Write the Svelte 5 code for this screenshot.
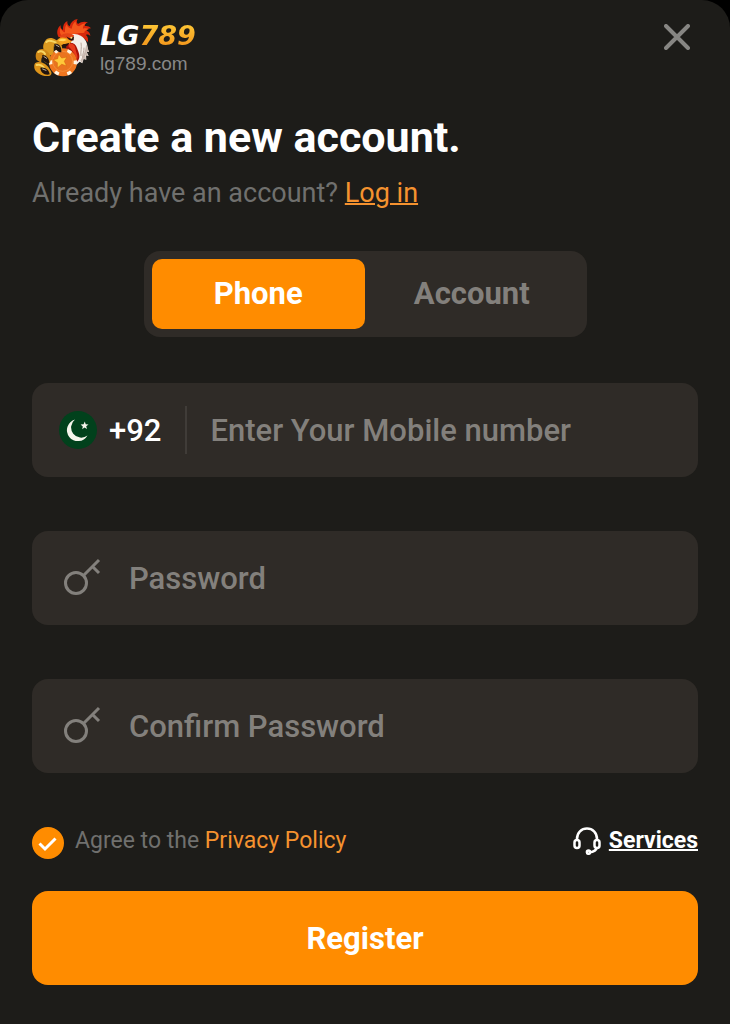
<script>
    let tab = "phone";
    let mobile = "";
    let account = "";
    let password = "";
    let confirmPassword = "";
    let agreed = true;

    const tabs = [
        { id: "phone", label: "Phone" },
        { id: "account", label: "Account" },
    ];
</script>

{#snippet keyIcon()}
    <svg class="key" viewBox="0 0 36 36" aria-hidden="true">
        <circle cx="12" cy="23" r="10.5" />
        <path d="M19.5 15.5L35 0M28.5 6.5L35 13" />
    </svg>
{/snippet}

<main class="sheet">
    <header>
        <a class="brand" href="#home">
            <svg class="mascot" viewBox="6 9 192 192" aria-hidden="true">
                <!-- comb -->
                <path fill="#d8280c" d="M86 76C78 62 82 48 92 40C91 48 94 52 99 54C98 42 102 32 112 27C111 35 114 40 119 43C122 31 130 23 143 21C139 28 140 33 144 36C153 29 164 27 174 31C166 34 164 38 165 42C172 41 178 43 183 49C175 49 171 52 170 56C177 58 181 64 181 72C175 67 171 67 168 69C174 75 176 83 173 91C165 77 148 68 130 68Z" />
                <path fill="#f4571c" d="M92 68C88 59 89 52 92 48C95 56 100 60 105 61C104 50 106 42 110 37C113 46 119 50 125 50C127 39 131 32 137 28C137 37 140 42 147 43C155 37 162 34 168 34C161 39 158 45 159 50C166 48 172 49 176 52C167 54 163 58 163 62C151 63 121 64 108 74Z" />
                <!-- neck -->
                <path fill="#f5eee8" d="M112 72C133 59 158 68 168 88C174 100 172 111 177 120L170 119L176 132L168 130L169 143L161 141L157 154L149 149L139 159L133 133L126 99Z" />
                <path fill="#c9b9b0" d="M169 96L177 120L169 119L175 132L166 130L168 142L160 140L156 153L151 146C161 132 166 116 169 96Z" />
                <path fill="none" stroke="#b8a69c" stroke-width="3" d="M153 92C156 108 151 119 153 132M162 107C163 118 157 127 158 137" />
                <!-- wattle -->
                <path fill="#a91308" d="M108 95C123 89 137 94 141 108C145 120 154 134 143 148C137 151 133 143 130 131C126 116 119 111 109 112Z" />
                <path fill="#e83b1c" d="M116 95C128 93 135 99 136 109C137 122 146 132 141 142C136 131 130 116 116 104Z" />
                <!-- face and beak -->
                <path fill="#e24316" d="M88 73C101 62 121 61 132 70L126 87L98 94Z" />
                <path fill="#f3a21d" d="M79 88C84 77 97 73 110 79L125 88L118 96L101 96L91 105Z" />
                <path fill="#ffd65c" d="M85 86C91 79 102 79 111 84L100 88Z" />
                <path fill="#27130c" d="M91 100L119 92L111 102L95 105ZM109 72C116 80 124 81 132 73L131 85C122 88 114 83 109 72Z" />
                <circle cx="124" cy="77" r="3" fill="#ffe58a" />
                <!-- chip -->
                <circle cx="99" cy="151" r="42" fill="#f0761f" />
                <circle cx="99" cy="151" r="37" fill="none" stroke="#fff3df" stroke-width="10" stroke-dasharray="13 25.7" stroke-dashoffset="7" />
                <circle cx="98" cy="148" r="30" fill="#ea7420" stroke="#f79a45" stroke-width="2" />
                <path fill="#ffc83a" stroke="#d96a10" stroke-width="2" d="M86 126L95 138L111 135L103 148L110 162L95 157L82 168L82 152L69 143L83 140Z" />
                <!-- claws -->
                <path fill="#dc9a20" d="M45 88C51 75 67 76 77 83C91 88 99 101 96 116C87 121 76 111 72 100C70 110 74 122 66 128C58 134 50 126 44 119C37 110 39 95 45 88Z" />
                <path fill="#cf8716" d="M22 117C32 106 49 110 57 124C64 135 65 148 57 154C46 155 39 144 38 134C33 137 34 148 34 153L20 144C15 134 17 123 22 117Z" />
                <path fill="#df951a" d="M16 153C29 145 51 155 60 173C68 182 65 192 54 192C38 194 16 183 13 168C12 161 13 156 16 153Z" />
                <path fill="none" stroke="#f8d662" stroke-width="6" stroke-linecap="round" d="M49 90C57 81 67 88 77 91M25 120C33 115 42 119 45 126M20 159C29 156 36 160 41 166" />
                <path fill="#20140f" d="M73 96C88 93 96 107 94 121C82 121 72 109 73 96ZM37 129C49 128 58 139 58 154C45 154 35 142 37 129ZM31 167C45 164 58 174 59 187C44 191 31 181 31 167Z" />
                <path fill="none" stroke="#c5b59b" stroke-width="3" stroke-linecap="round" d="M78 99L87 104M42 134L50 139M38 171L48 175" />
            </svg>
            <span class="wordmark">
                <span class="name">LG<span class="digits">789</span></span>
                <span class="domain">lg789.com</span>
            </span>
        </a>
        <button class="close" type="button" aria-label="Close">
            <svg viewBox="0 0 26 26" aria-hidden="true">
                <path d="M2 2L24 24M24 2L2 24" />
            </svg>
        </button>
    </header>

    <h1>Create a new account.</h1>
    <p class="login">Already have an account? <a href="#login">Log in</a></p>

    <div class="tabs">
        {#each tabs as item}
            <button
                type="button"
                class:selected={tab === item.id}
                aria-pressed={tab === item.id}
                on:click={() => (tab = item.id)}
            >
                {item.label}
            </button>
        {/each}
    </div>

    <form on:submit|preventDefault>
        {#if tab === "phone"}
            <div class="field phone">
                <button class="country" type="button" aria-label="Country code +92">
                    <svg class="flag" viewBox="0 0 38 38" aria-hidden="true">
                        <circle cx="19" cy="19" r="19" fill="#01411c" />
                        <path fill="#f5f5ec" d="M16 8.5A11 11 0 1 0 28.5 24.5A9.5 9.5 0 1 1 16 8.5Z" />
                        <path fill="#f5f5ec" d="M25.8 10.5L26.7 13.3L29.5 13.6L27.2 15.3L28 18.1L25.5 16.6L23.2 18.2L23.8 15.4L21.6 13.5L24.6 13.2Z" />
                    </svg>
                    +92
                </button>
                <input type="tel" aria-label="Mobile number" placeholder="Enter Your Mobile number" bind:value={mobile} />
            </div>
        {:else}
            <label class="field">
                <input type="text" aria-label="Account" placeholder="Account" bind:value={account} />
            </label>
        {/if}

        <label class="field">
            {@render keyIcon()}
            <input type="password" aria-label="Password" placeholder="Password" bind:value={password} />
        </label>

        <label class="field">
            {@render keyIcon()}
            <input type="password" aria-label="Confirm Password" placeholder="Confirm Password" bind:value={confirmPassword} />
        </label>

        <div class="terms">
            <div class="agree">
                <span class="check">
                    <input id="agree" type="checkbox" bind:checked={agreed} />
                    <svg viewBox="0 0 32 32" aria-hidden="true">
                        <path d="M7.5 16.5L13 22L23.5 11.5" />
                    </svg>
                </span>
                <span><label for="agree">Agree to the</label> <a href="#privacy">Privacy Policy</a></span>
            </div>
            <a class="services" href="#services">
                <svg viewBox="0 0 28 28" aria-hidden="true">
                    <path d="M4 13V12C4 5.5 8.5 1.5 14 1.5S24 5.5 24 12V13M24 20C23.5 23 20 25 16 25.5" />
                    <rect x="1.5" y="13" width="5" height="8" rx="2.5" />
                    <rect x="21.5" y="13" width="5" height="8" rx="2.5" />
                    <circle cx="15.5" cy="25.2" r="1.6" />
                </svg>
                <span>Services</span>
            </a>
        </div>

        <button class="register" type="submit">Register</button>
    </form>
</main>

<style>
    :global(body) {
        background: #000;
    }

    .sheet {
        box-sizing: border-box;
        min-height: 100vh;
        padding: 15px 32px 39px;
        border-radius: 28px 28px 0 0;
        background: #1d1c19;
        color: #fff;
        font-family: Roboto, sans-serif;
    }

    button,
    input {
        font-family: inherit;
    }

    button {
        padding: 0;
        border: none;
        background: none;
        color: inherit;
        cursor: pointer;
    }

    a {
        color: #f5922f;
    }

    header {
        display: flex;
        justify-content: space-between;
        align-items: flex-start;
    }

    .brand {
        display: flex;
        align-items: center;
        gap: 4px;
        text-decoration: none;
    }

    .mascot {
        width: 64px;
        height: 64px;
    }

    .wordmark {
        display: flex;
        flex-direction: column;
        padding-top: 2px;
    }

    .name {
        color: #fff;
        font: italic 700 27px/32px "DejaVu Sans", sans-serif;
    }

    .digits {
        background: linear-gradient(#ffcf3a, #f08c17);
        background-clip: text;
        color: transparent;
    }

    .domain {
        color: #888;
        font: 19px/24px "Liberation Sans", sans-serif;
    }

    .close {
        display: flex;
        margin-top: 9px;
        padding: 0 8px;
    }

    .close svg {
        width: 26px;
        height: 26px;
        fill: none;
        stroke: #878683;
        stroke-width: 4;
        stroke-linecap: round;
    }

    h1 {
        margin: 32px 0 0;
        font-size: 43px;
        font-weight: 700;
        line-height: 52px;
    }

    .login {
        margin: 14px 0 0;
        color: #70706e;
        font-size: 27px;
        line-height: 32px;
    }

    .login a {
        text-decoration-thickness: 2px;
    }

    .tabs {
        display: flex;
        box-sizing: border-box;
        max-width: 443px;
        margin: 42px auto 0;
        padding: 8px;
        border-radius: 16px;
        background: #2f2b27;
    }

    .tabs button {
        flex: 1;
        height: 70px;
        padding-bottom: 2px;
        border-radius: 10px;
        color: #83807c;
        font-size: 31px;
        font-weight: 700;
    }

    .tabs button.selected {
        background: #ff8c00;
        color: #fff;
    }

    form {
        display: flex;
        flex-direction: column;
        margin-top: 46px;
    }

    .field {
        display: flex;
        align-items: center;
        box-sizing: border-box;
        height: 94px;
        margin-bottom: 54px;
        padding: 0 32px;
        border-radius: 16px;
        background: #2f2b27;
    }

    .phone {
        padding-left: 27px;
    }

    .country {
        display: flex;
        align-items: center;
        gap: 12px;
        height: 48px;
        margin-right: 23px;
        padding-right: 24px;
        border-right: 2px solid #403c38;
        font-size: 31px;
        font-weight: 500;
    }

    .flag {
        width: 38px;
        height: 38px;
    }

    .key {
        width: 36px;
        height: 36px;
        margin-right: 29px;
        flex: none;
        overflow: visible;
        fill: none;
        stroke: #83807c;
        stroke-width: 3;
    }

    .field input {
        flex: 1;
        min-width: 0;
        padding: 0;
        border: none;
        outline: none;
        background: none;
        color: #fff;
        font-size: 31px;
        font-weight: 500;
    }

    .field input::placeholder {
        color: #83807c;
        opacity: 1;
    }

    .terms {
        display: flex;
        justify-content: space-between;
        align-items: flex-start;
        height: 32px;
        font-size: 23px;
        line-height: 28px;
    }

    .agree {
        display: flex;
        gap: 11px;
        color: #70706e;
    }

    .agree a {
        text-decoration: none;
    }

    .check {
        display: grid;
        width: 32px;
        height: 32px;
    }

    .check input,
    .check svg {
        grid-area: 1 / 1;
        width: 32px;
        height: 32px;
        margin: 0;
    }

    .check input {
        box-sizing: border-box;
        appearance: none;
        border: 2px solid #70706e;
        border-radius: 50%;
    }

    .check input:checked {
        border-color: #ff8c00;
        background: #ff8c00;
    }

    .check svg {
        visibility: hidden;
        fill: none;
        stroke: #fff;
        stroke-width: 3;
        pointer-events: none;
    }

    .check input:checked + svg {
        visibility: visible;
    }

    .services {
        display: flex;
        gap: 8px;
        color: #fff;
        font-weight: 700;
        text-decoration-thickness: 2px;
    }

    .services svg {
        width: 28px;
        height: 28px;
        fill: none;
        stroke: #fff;
        stroke-width: 2.5;
    }

    .register {
        height: 94px;
        margin-top: 32px;
        border-radius: 16px;
        background: #ff8c00;
        font-size: 31px;
        font-weight: 700;
    }
</style>
